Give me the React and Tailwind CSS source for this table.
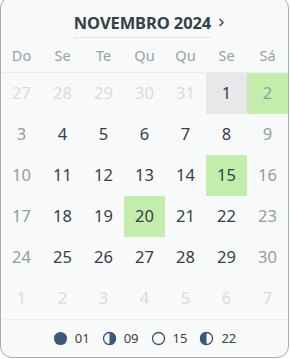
import React from "react";

const weekdays = ["Do", "Se", "Te", "Qu", "Qu", "Se", "Sá"];

// November 2024 grid, with trailing days from October and December
const buildDays = () => {
  const days = [];
  [27, 28, 29, 30, 31].forEach((d) => days.push({ d, out: true }));
  for (let d = 1; d <= 30; d++) days.push({ d });
  for (let d = 1; d <= 7; d++) days.push({ d, out: true });
  return days;
};

const highlights = { 1: "today", 2: "moon", 15: "moon", 20: "moon" };

function MoonIcon({ phase }) {
  const color = "#3b5877";
  return (
    <svg width="15" height="15" viewBox="0 0 16 16">
      {phase === "full" && <circle cx="8" cy="8" r="7" fill={color} />}
      {phase === "new" && <circle cx="8" cy="8" r="6.4" fill="none" stroke={color} strokeWidth="1.4" />}
      {phase === "first" && (
        <>
          <circle cx="8" cy="8" r="6.4" fill="none" stroke={color} strokeWidth="1.4" />
          <path d="M8 1 A7 7 0 0 1 8 15 Z" fill={color} />
        </>
      )}
      {phase === "last" && (
        <>
          <circle cx="8" cy="8" r="6.4" fill="none" stroke={color} strokeWidth="1.4" />
          <path d="M8 1 A7 7 0 0 0 8 15 Z" fill={color} />
        </>
      )}
    </svg>
  );
}

export default function App() {
  const days = buildDays();

  return (
    <div className="w-[290px] h-[359px] bg-white overflow-hidden" style={{ fontFamily: '"Noto Sans", sans-serif' }}>
      <div className="-mt-1 w-[289px] h-[362px] bg-[#f8f9f9] border border-[#a3adb8] rounded-xl flex flex-col">
        {/* month header */}
        <div className="flex justify-center items-center pt-[12px] h-[44px]">
          <div className="relative flex items-center ml-[10px]">
            <span className="text-[16.5px] font-bold text-[#373f47] tracking-[-0.1px] border-b border-[#e1e3e6] pb-[3px] leading-[22px]">
              NOVEMBRO 2024
            </span>
            <svg className="ml-[7px] -mt-[5px]" width="7" height="9" viewBox="0 0 7 9">
              <path d="M1.5 1 L5 4.5 L1.5 8" fill="none" stroke="#4a525b" strokeWidth="1.6" />
            </svg>
          </div>
        </div>

        {/* weekday labels */}
        <div className="grid grid-cols-7 h-[32px] border-b border-[#ebedef]">
          {weekdays.map((w, i) => (
            <div key={i} className="flex items-center justify-center text-[14.5px] text-[#97a0aa] pb-[1px]">
              {w}
            </div>
          ))}
        </div>

        {/* days */}
        <div className="grid grid-cols-7">
          {days.map((item, i) => {
            const col = i % 7;
            const weekend = col === 0 || col === 6;
            const mark = !item.out ? highlights[item.d] : null;
            let bg = "";
            if (mark === "today") bg = "bg-[#e8e8ea]";
            if (mark === "moon") bg = "bg-[#c3edab]";
            let color = "text-[#373f47]";
            if (weekend) color = "text-[#939ca6]";
            if (item.out) color = "text-[#d9dcdf]";
            return (
              <div key={i} className={`h-[41px] flex items-center justify-center text-[16.5px] ${bg} ${color}`}>
                {item.d}
              </div>
            );
          })}
        </div>

        {/* moon phase legend */}
        <div className="border-t border-[#eef0f1] flex-1 flex items-start justify-center pt-[9px] gap-[12px] text-[13px] text-[#3a4149]">
          {[
            ["full", "01"],
            ["first", "09"],
            ["new", "15"],
            ["last", "22"],
          ].map(([p, n]) => (
            <div key={n} className="flex items-center gap-[7px]">
              <MoonIcon phase={p} />
              <span>{n}</span>
            </div>
          ))}
        </div>
      </div>
    </div>
  );
}
